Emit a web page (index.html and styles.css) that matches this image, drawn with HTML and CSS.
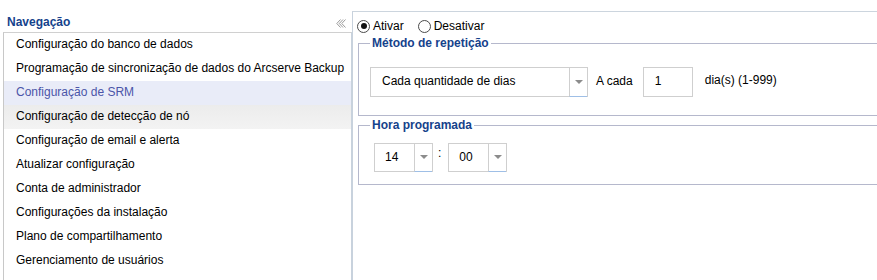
FILE: index.html
```html
<!DOCTYPE html>
<html lang="pt">
<head>
<meta charset="utf-8">
<title>Configuração de SRM</title>
<link rel="stylesheet" href="styles.css">
</head>
<body>
<div class="app">
  <aside class="nav">
    <div class="nav-header">
      <span class="nav-title">Navegação</span>
      <svg class="collapse" width="10" height="9" viewBox="0 0 10 9">
        <path d="M4.5 0.5 L0.8 4.5 L4.5 8.5 M7 0.5 L3.3 4.5 L7 8.5 M9.5 0.5 L5.8 4.5 L9.5 8.5" fill="none" stroke="#9a9a9a" stroke-width="1"/>
      </svg>
    </div>
    <ul class="nav-list">
      <li class="nav-item">Configuração do banco de dados</li>
      <li class="nav-item">Programação de sincronização de dados do Arcserve Backup</li>
      <li class="nav-item selected">Configuração de SRM</li>
      <li class="nav-item hover">Configuração de detecção de nó</li>
      <li class="nav-item">Configuração de email e alerta</li>
      <li class="nav-item">Atualizar configuração</li>
      <li class="nav-item">Conta de administrador</li>
      <li class="nav-item">Configurações da instalação</li>
      <li class="nav-item">Plano de compartilhamento</li>
      <li class="nav-item">Gerenciamento de usuários</li>
    </ul>
  </aside>
  <main class="content">
    <div class="radio-row">
      <span class="radio checked"></span><span class="radio-label first">Ativar</span>
      <span class="radio"></span><span class="radio-label">Desativar</span>
    </div>
    <fieldset class="group group-repeat">
      <legend>Método de repetição</legend>
      <div class="row">
        <div class="combo combo-wide">
          <span class="combo-text">Cada quantidade de dias</span>
          <span class="trigger"><span class="arrow"></span></span>
        </div>
        <span class="label-acada">A cada</span>
        <div class="textbox">1</div>
        <span class="label-dias">dia(s) (1-999)</span>
      </div>
    </fieldset>
    <fieldset class="group group-time">
      <legend>Hora programada</legend>
      <div class="row time-row">
        <div class="combo combo-small">
          <span class="combo-text">14</span>
          <span class="trigger"><span class="arrow"></span></span>
        </div>
        <span class="colon">:</span>
        <div class="combo combo-small">
          <span class="combo-text">00</span>
          <span class="trigger"><span class="arrow"></span></span>
        </div>
      </div>
    </fieldset>
  </main>
</div>
</body>
</html>
```

FILE: styles.css
```css
html, body {
  margin: 0;
  padding: 0;
  background: #ffffff;
  overflow: hidden;
}
body {
  font-family: "Liberation Sans", Arial, sans-serif;
  font-size: 12px;
  color: #000;
  width: 877px;
  height: 280px;
}
.app {
  display: flex;
  height: 280px;
}
.nav {
  width: 352px;
  flex: none;
  display: flex;
  flex-direction: column;
}
.nav-header {
  height: 32px;
  box-sizing: border-box;
  padding: 15px 6px 0 7px;
  display: flex;
  justify-content: space-between;
  align-items: flex-start;
}
.nav-title {
  font-weight: bold;
  color: #15428b;
  line-height: 14px;
}
.collapse {
  margin-top: 4px;
}
.nav-list {
  list-style: none;
  margin: 0 0 0 3px;
  padding: 0;
  flex: 1;
  border-top: 1px solid #d0d0d0;
  border-left: 1px solid #c8c8c8;
  border-right: 1px solid #c8d2dd;
}
.nav-item {
  height: 24px;
  box-sizing: border-box;
  line-height: 22px;
  padding: 0 0 2px 12px;
  white-space: nowrap;
}
.nav-item.selected {
  background: #e9ecf8;
  color: #4b55a8;
}
.nav-item.hover {
  background: linear-gradient(#ececec, #f3f3f3);
}
.content {
  flex: 1;
  margin-top: 11px;
  border-top: 1px solid #ccd5de;
  border-left: 1px solid #c8d2dd;
  overflow: hidden;
  min-width: 0;
}
.radio-row {
  display: flex;
  align-items: center;
  height: 20px;
  padding: 4px 0 0 4px;
}
.radio {
  width: 11px;
  height: 11px;
  border: 1px solid #4a4a4a;
  border-radius: 50%;
  box-sizing: content-box;
  position: relative;
  flex: none;
  background: #fff;
}
.radio.checked::after {
  content: "";
  position: absolute;
  left: 2.5px;
  top: 2.5px;
  width: 6px;
  height: 6px;
  border-radius: 50%;
  background: #111;
}
.radio-label {
  margin-left: 3px;
}
.radio-label.first {
  margin-right: 14px;
}
.group {
  margin: 0 -20px 0 5px;
  border: 1px solid #b5b8cc;
  padding: 0 10px 0 11px;
  min-width: 0;
}
.group legend {
  font-weight: bold;
  color: #15428b;
  line-height: 14px;
  padding: 0 2px;
  font-size: 12px;
}
.group-repeat {
  padding-top: 17px;
  padding-bottom: 18px;
}
.group-time {
  margin-top: 2px;
  padding-top: 11px;
  padding-bottom: 12px;
}
.row {
  display: flex;
  align-items: center;
}
.combo {
  display: flex;
  border: 1px solid #cfcfcf;
  box-sizing: border-box;
  background: #fff;
  flex: none;
}
.combo-wide {
  width: 218px;
  height: 30px;
}
.combo-small {
  width: 59px;
  height: 29px;
}
.combo-text {
  flex: 1;
  line-height: 27px;
  padding-left: 11px;
  white-space: nowrap;
}
.combo-small .combo-text {
  padding-left: 10px;
}
.trigger {
  width: 17px;
  flex: none;
  border-left: 1px solid #cfcfcf;
  border-bottom: 1px solid #9fbfe6;
  margin-bottom: -1px;
  display: flex;
  align-items: center;
  justify-content: center;
}
.arrow {
  width: 0;
  height: 0;
  border-left: 4px solid transparent;
  border-right: 4px solid transparent;
  border-top: 4px solid #8c8c8c;
  margin-top: -1px;
}
.label-acada {
  margin-left: 8px;
  margin-top: -2px;
}
.textbox {
  margin-left: 10px;
  width: 50px;
  height: 30px;
  box-sizing: border-box;
  border: 1px solid #cfcfcf;
  line-height: 27px;
  padding-left: 11px;
}
.label-dias {
  margin-left: 12px;
  margin-top: -4px;
}
.time-row {
  margin-left: 4px;
}
.colon {
  margin: -9px 7px 0 5px;
}
```
